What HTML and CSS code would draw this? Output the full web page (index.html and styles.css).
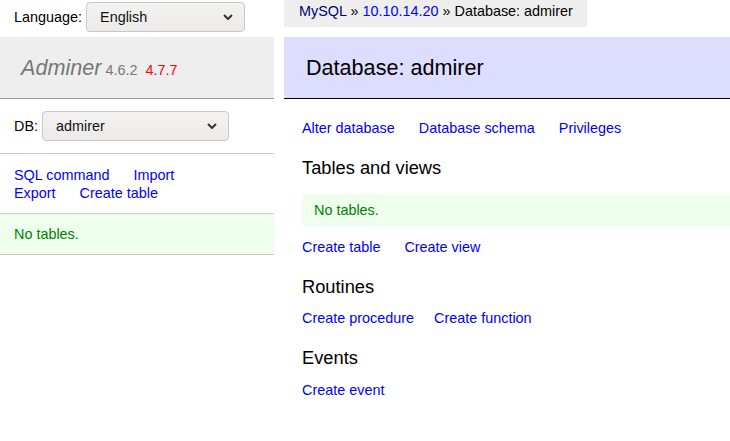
FILE: index.html
```html
<!DOCTYPE html>
<html lang="en">
<head>
<meta charset="utf-8">
<title>Database: admirer - Adminer</title>
<link rel="stylesheet" href="styles.css">
</head>
<body>
<aside class="sidebar">
  <div class="lang">
    <span class="label">Language:</span>
    <div class="select lang-select"><span>English</span><svg class="chev" width="10" height="6" viewBox="0 0 10 6"><polyline points="1,1 5,5 9,1" fill="none" stroke="#333" stroke-width="2"/></svg></div>
  </div>
  <h1 class="brand"><a href="#" class="brand-name">Adminer</a><span class="version">4.6.2</span><a href="#" class="new-version">4.7.7</a></h1>
  <div class="db-row">
    <span class="label">DB:</span>
    <div class="select db-select"><span>admirer</span><svg class="chev" width="10" height="6" viewBox="0 0 10 6"><polyline points="1,1 5,5 9,1" fill="none" stroke="#333" stroke-width="2"/></svg></div>
  </div>
  <div class="side-links">
    <div><a href="#">SQL command</a> <a href="#">Import</a></div>
    <div><a href="#">Export</a> <a href="#">Create table</a></div>
  </div>
  <div class="side-msg">No tables.</div>
</aside>
<main class="main">
  <div class="breadcrumb"><a href="#" class="visited">MySQL</a> » <a href="#">10.10.14.20</a> » Database: admirer</div>
  <h2 class="title">Database: admirer</h2>
  <div class="content">
    <p class="links first"><a href="#">Alter database</a> <a href="#">Database schema</a> <a href="#">Privileges</a></p>
    <h3>Tables and views</h3>
    <p class="message">No tables.</p>
    <p class="links"><a href="#">Create table</a> <a href="#">Create view</a></p>
    <h3>Routines</h3>
    <p class="links"><a href="#" class="tight">Create procedure</a> <a href="#">Create function</a></p>
    <h3>Events</h3>
    <p class="links"><a href="#">Create event</a></p>
  </div>
</main>
</body>
</html>
```
FILE: styles.css
```css
html, body {
  margin: 0;
  padding: 0;
  background: #fff;
}
body {
  font-family: "Liberation Sans", Arial, sans-serif;
  font-size: 14.4px;
  line-height: 18px;
  color: #000;
  display: flex;
  align-items: flex-start;
}
a {
  color: #00f;
  text-decoration: none;
}
a.visited {
  color: #000080;
}

/* Sidebar */
.sidebar {
  width: 274px;
  flex: none;
}
.lang {
  height: 37px;
  box-sizing: border-box;
  padding: 2px 0 5px 14px;
  display: flex;
  align-items: center;
  gap: 4px;
}
.select {
  height: 30px;
  box-sizing: border-box;
  border: 1px solid #c8c8c8;
  border-radius: 4px;
  background: linear-gradient(#f3f2f1, #ecebea);
  display: flex;
  align-items: center;
  justify-content: space-between;
  padding: 0 11px 0 13px;
  color: #111;
}
.lang-select {
  width: 159px;
}
.db-select {
  width: 187px;
}
.chev {
  display: block;
}
.brand {
  margin: 0;
  height: 61px;
  box-sizing: content-box;
  padding: 0 0 0 21px;
  display: flex;
  align-items: baseline;
  line-height: 61px;
  background: #eee;
  border-bottom: 1px solid #999;
  font-size: 21.6px;
  font-weight: normal;
}
.brand-name {
  color: #777;
  font-style: italic;
}
.version {
  color: #777;
  font-size: 14.4px;
  margin-left: 4px;
}
.new-version {
  color: red;
  font-size: 14.4px;
  margin-left: 8px;
}
.db-row {
  padding: 12px 14px;
  display: flex;
  align-items: center;
  gap: 4px;
  border-bottom: 1px solid #ccc;
}
.side-links {
  padding: 12px 14px 11px;
  border-bottom: 1px solid #ccc;
}
.side-links a,
.links a {
  margin-right: 20px;
  white-space: nowrap;
}
.links a.tight {
  margin-right: 16px;
}
.side-msg {
  padding: 11px 14px;
  background: #efe;
  color: green;
  border-bottom: 1px solid #ccc;
}

/* Main */
.main {
  flex: 1;
  min-width: 0;
  padding-left: 10px;
  display: flex;
  flex-direction: column;
  align-items: stretch;
}
.breadcrumb {
  align-self: flex-start;
  height: 27px;
  line-height: 23px;
  padding: 0 14px 0 15px;
  background: #eee;
  white-space: nowrap;
  margin-bottom: 10px;
}
.title {
  margin: 0;
  padding: 17px 22px;
  font-size: 21.6px;
  line-height: 27px;
  font-weight: normal;
  background: #ddf;
  border-bottom: 1px solid #000;
}
.content {
  padding-left: 18px;
}
.links {
  margin: 0;
}
.links.first {
  margin-top: 20px;
}
h3 {
  font-size: 18.3px;
  line-height: 23.4px;
  font-weight: normal;
  margin: 19px 0 11px;
}
.message {
  margin: 14.6px 0 12px;
  padding: 7px 12px;
  background: #efe;
  color: green;
}
```
